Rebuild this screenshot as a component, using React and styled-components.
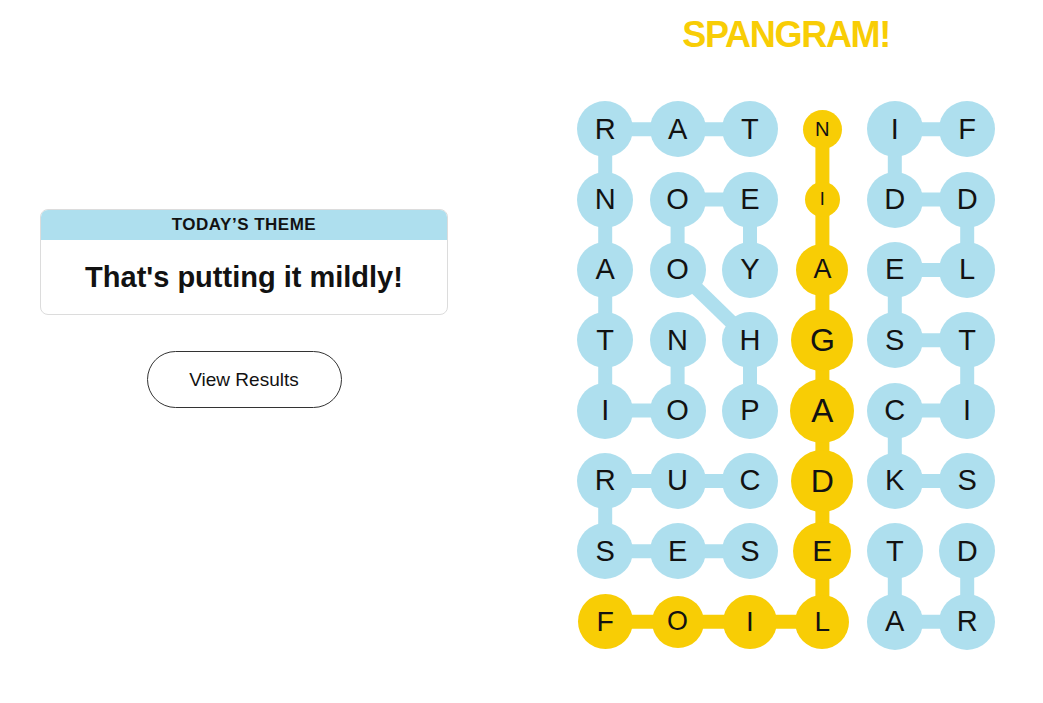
import React from 'react';
import styled, { createGlobalStyle } from 'styled-components';

const GlobalStyle = createGlobalStyle`
  html, body {
    margin: 0;
    padding: 0;
    background: #fff;
    font-family: 'Liberation Sans', Arial, sans-serif;
    color: #121212;
  }
`;

const CELL_W = 72.4;
const CELL_H = 70.35;
const BLUE = '#aedfee';
const YELLOW = '#f8cd05';

const Page = styled.div`
  display: flex;
  align-items: flex-start;
  gap: 121px;
  padding-left: 40px;
  width: 1043px;
  height: 703px;
  box-sizing: border-box;
  overflow: hidden;
`;

const LeftColumn = styled.div`
  display: flex;
  flex-direction: column;
  align-items: center;
  width: 408px;
  padding-top: 209px;
`;

const ThemeCard = styled.div`
  width: 100%;
  border-radius: 8px;
  border: 1px solid #dcdcdc;
  box-sizing: border-box;
  overflow: hidden;
`;

const ThemeHeader = styled.div`
  height: 31px;
  margin: -1px -1px 0;
  background: ${BLUE};
  display: flex;
  align-items: center;
  justify-content: center;
  font-weight: 700;
  font-size: 17px;
  letter-spacing: 0.5px;
  text-transform: uppercase;
`;

const ThemeTitle = styled.div`
  height: 74px;
  display: flex;
  align-items: center;
  justify-content: center;
  font-weight: 700;
  font-size: 29px;
  padding-top: 1px;
  box-sizing: border-box;
`;

const ResultsButton = styled.button`
  margin-top: 36px;
  width: 195px;
  height: 57px;
  border-radius: 999px;
  border: 1px solid #333;
  background: #fff;
  font-family: 'Liberation Sans', Arial, sans-serif;
  font-size: 19px;
  color: #121212;
  cursor: pointer;
`;

const RightColumn = styled.div`
  display: flex;
  flex-direction: column;
  align-items: center;
  padding-top: 17px;
`;

const Title = styled.h1`
  margin: 0 0 41px;
  height: 36px;
  line-height: 36px;
  font-size: 36px;
  font-weight: 700;
  letter-spacing: -1.3px;
  color: ${YELLOW};
`;

const Board = styled.div`
  position: relative;
  display: grid;
  grid-template-columns: repeat(6, ${CELL_W}px);
  grid-template-rows: repeat(8, ${CELL_H}px);
`;

const Links = styled.svg`
  position: absolute;
  inset: 0;
  z-index: 0;
`;

const Cell = styled.div`
  position: relative;
  z-index: 1;
  display: flex;
  align-items: center;
  justify-content: center;
`;

const Letter = styled.div`
  width: ${(p) => p.$size}px;
  height: ${(p) => p.$size}px;
  border-radius: 50%;
  background: ${(p) => (p.$found ? YELLOW : BLUE)};
  display: flex;
  align-items: center;
  justify-content: center;
  font-size: ${(p) => (p.$size * 29) / 56}px;
  line-height: 1;
  color: #121212;
`;

const grid = ['RATNIF', 'NOEIDD', 'AOYAEL', 'TNHGST', 'IOPACI', 'RUCDKS', 'SESETD', 'FOILAR'];

// sizes of the spangram circles, caught mid-animation
const found = {
  '0,3': 39, '1,3': 35, '2,3': 52, '3,3': 62, '4,3': 64, '5,3': 62, '6,3': 58, '7,3': 54,
  '7,0': 55, '7,1': 52, '7,2': 54,
};

const blueLinks = [
  [0, 0, 0, 1], [0, 1, 0, 2], [0, 4, 0, 5], [0, 0, 1, 0], [0, 4, 1, 4],
  [1, 0, 2, 0], [1, 1, 1, 2], [1, 4, 1, 5], [1, 1, 2, 1], [1, 2, 2, 2], [1, 5, 2, 5],
  [2, 0, 3, 0], [2, 1, 3, 2], [2, 4, 2, 5], [2, 4, 3, 4],
  [3, 0, 4, 0], [3, 1, 4, 1], [3, 2, 4, 2], [3, 4, 3, 5], [3, 5, 4, 5],
  [4, 0, 4, 1], [4, 4, 4, 5], [4, 4, 5, 4],
  [5, 0, 5, 1], [5, 1, 5, 2], [5, 4, 5, 5], [5, 0, 6, 0],
  [6, 0, 6, 1], [6, 1, 6, 2], [6, 4, 7, 4], [6, 5, 7, 5],
  [7, 4, 7, 5],
];

const yellowLinks = [
  [0, 3, 7, 3], [7, 0, 7, 3],
];

const cx = (c) => CELL_W / 2 + c * CELL_W;
const cy = (r) => CELL_H / 2 + r * CELL_H;

function Link({ l, color }) {
  return (
    <line
      x1={cx(l[1])}
      y1={cy(l[0])}
      x2={cx(l[3])}
      y2={cy(l[2])}
      stroke={color}
      strokeWidth="14"
    />
  );
}

export default function App() {
  return (
    <>
      <GlobalStyle />
      <Page>
        <LeftColumn>
          <ThemeCard>
            <ThemeHeader>Today’s Theme</ThemeHeader>
            <ThemeTitle>That's putting it mildly!</ThemeTitle>
          </ThemeCard>
          <ResultsButton>View Results</ResultsButton>
        </LeftColumn>

        <RightColumn>
          <Title>SPANGRAM!</Title>
          <Board>
            <Links width={CELL_W * 6} height={CELL_H * 8}>
              {blueLinks.map((l, i) => (
                <Link key={'b' + i} l={l} color={BLUE} />
              ))}
              {yellowLinks.map((l, i) => (
                <Link key={'y' + i} l={l} color={YELLOW} />
              ))}
            </Links>
            {grid.map((row, r) =>
              row.split('').map((ch, c) => {
                const size = found[`${r},${c}`];
                return (
                  <Cell key={`${r}-${c}`}>
                    <Letter $found={!!size} $size={size || 56}>
                      {ch}
                    </Letter>
                  </Cell>
                );
              })
            )}
          </Board>
        </RightColumn>
      </Page>
    </>
  );
}
